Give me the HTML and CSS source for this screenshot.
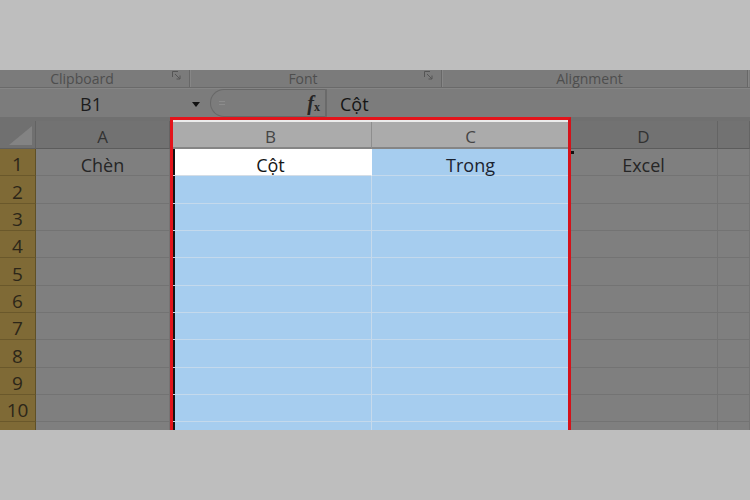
FILE: index.html
```html
<!DOCTYPE html>
<html lang="vi">
<head>
  <meta charset="UTF-8">
  <meta name="viewport" content="width=device-width, initial-scale=1.0">
  <title>Chèn cột trong Excel</title>
  <link rel="stylesheet" href="styles.css">
</head>
<body>

<div class="band"></div>

<div class="excel">
  <div class="ribbon">
    <div class="group group-clip">
      <span class="group-label">Clipboard</span>
      <svg class="launcher" width="9" height="9" viewBox="0 0 9 9"><path d="M0.5 6V0.5H6M3 3l5 5M8 4.5V8H4.5" fill="none" stroke="#555" stroke-width="1"/></svg>
    </div>
    <div class="group group-font">
      <span class="group-label">Font</span>
      <svg class="launcher" width="9" height="9" viewBox="0 0 9 9"><path d="M0.5 6V0.5H6M3 3l5 5M8 4.5V8H4.5" fill="none" stroke="#555" stroke-width="1"/></svg>
    </div>
    <div class="group group-align">
      <span class="group-label">Alignment</span>
    </div>
  </div>

  <div class="formula-bar">
    <div class="name-box">
      <span class="name">B1</span>
      <span class="name-arrow"></span>
    </div>
    <div class="fx-box">
      <span class="grip"></span>
      <span class="fx"><i>f</i><sub>x</sub></span>
    </div>
    <div class="formula">Cột</div>
  </div>

  <div class="sheet">
    <div class="row head">
      <div class="corner"><span class="corner-mark"></span></div>
      <div class="ch">A</div>
      <div class="ch lit">B</div>
      <div class="ch lit">C</div>
      <div class="ch">D</div>
      <div class="ch"></div>
    </div>
    <div id="rows"></div>
  </div>

  <!-- selected columns B:C -->
  <div class="selection"></div>
  <div class="fill-handle"></div>
</div>

<div class="band"></div>

<script>
  const rowsBox = document.getElementById("rows");

  // Column classes for A..E
  const colClass = ["", "lit col-b", "lit", "", ""];
  const firstRow = ["Chèn", "Cột", "Trong", "Excel", ""];

  // rows 1-10 plus the top sliver of the next one
  for (let i = 1; i <= 11; i++) {
    const row = document.createElement("div");
    row.className = "row";
    const values = i === 1 ? firstRow : ["", "", "", "", ""];
    let html = `<div class="rh">${i <= 10 ? i : ""}</div>`;
    values.forEach((v, c) => {
      let cls = "cell " + colClass[c];
      if (i === 1 && c === 1) cls += " active";
      html += `<div class="${cls}">${v}</div>`;
    });
    row.innerHTML = html;
    rowsBox.appendChild(row);
  }
</script>

</body>
</html>
```

FILE: styles.css
```css
* {
  box-sizing: border-box;
}
body {
  margin: 0;
  background-color: #bebebe;
  font-family: "Open Sans", "Noto Sans", sans-serif;
}
.band {
  height: 70px;
  background-color: #bebebe;
}
.excel {
  position: relative;
  height: 360px;
  overflow: hidden;
  background-color: #7a7a7a;
}

/* ribbon group captions */
.ribbon {
  display: flex;
  height: 18px;
  border-bottom: 1px solid #6a6a6a;
  background-color: #7b7b7b;
}
.group {
  display: flex;
  align-items: center;
  border-right: 1px solid #676767;
  box-shadow: 1px 0 0 #868686;
}
.group-clip {
  width: 190px;
}
.group-font {
  width: 252px;
}
.group-align {
  width: 306px;
}
.group-label {
  flex: 1;
  text-align: center;
  padding-right: 8px;
  font-size: 14px;
  color: #4e4e4e;
  line-height: 18px;
}
.group-align .group-label {
  padding-right: 10px;
}
.launcher {
  margin-right: 8px;
  margin-top: -6px;
}

/* name box + formula bar */
.formula-bar {
  display: flex;
  height: 29px;
  border-top: 1px solid #858585;
  background-color: #7c7c7c;
}
.name-box {
  display: flex;
  align-items: center;
  width: 205px;
  padding-top: 2px;
}
.name {
  padding-left: 80px;
  font-size: 18px;
  color: #1c1c1c;
}
.name-arrow {
  margin-left: auto;
  margin-right: 5px;
  border-top: 5px solid #111;
  border-left: 4px solid transparent;
  border-right: 4px solid transparent;
}
.fx-box {
  display: flex;
  align-items: center;
  justify-content: space-between;
  width: 117px;
  margin-left: 5px;
  padding: 0 5px 0 8px;
  border: 1px solid #686868;
  border-right: 2px solid #6a6a6a;
  border-radius: 14px 0 0 14px;
}
.grip {
  width: 6px;
  height: 4px;
  border-top: 1px solid #8c8c8c;
  border-bottom: 1px solid #8c8c8c;
}
.fx {
  font-family: "Liberation Serif", serif;
  font-weight: bold;
  font-size: 20px;
  color: #252525;
}
.fx sub {
  font-size: 12px;
  vertical-align: -1px;
}
.formula {
  padding-left: 13px;
  padding-top: 1px;
  font-size: 18px;
  line-height: 28px;
  color: #151515;
}

/* worksheet grid */
.sheet {
  border-top: 4px solid #707070;
}
.row {
  display: grid;
  grid-template-columns: 36px 134px 202px 198px 148px 1fr;
  grid-template-rows: 100%;
  height: 27.35px;
}
.row.head {
  height: 28px;
}
.corner {
  display: flex;
  justify-content: flex-end;
  align-items: flex-end;
  padding: 0 3px 3px 0;
  background-color: #707070;
  border-right: 1px solid #636363;
  border-bottom: 1px solid #5e5e5e;
}
.corner-mark {
  width: 23px;
  height: 19px;
  background-color: #838383;
  clip-path: polygon(100% 0, 100% 100%, 0 100%);
}
.ch {
  display: flex;
  align-items: center;
  justify-content: center;
  padding-top: 5px;
  background-color: #727272;
  border-right: 1px solid #646464;
  border-bottom: 1px solid #5c5c5c;
  font-size: 17px;
  line-height: 20px;
  color: #323232;
}
.ch.lit {
  background-color: #ababab;
  border-right-color: #8e8e8e;
  border-bottom: 2px solid #858585;
  color: #454545;
}
.rh {
  display: flex;
  align-items: center;
  justify-content: center;
  padding-top: 4px;
  background-color: #7f6a36;
  border-right: 1px solid #5f5027;
  border-bottom: 1px solid #6a582b;
  font-size: 19px;
  line-height: 20px;
  color: #2c2619;
}
.cell {
  display: flex;
  align-items: center;
  justify-content: center;
  padding-top: 5px;
  background-color: #7f7f7f;
  border-right: 1px solid #747474;
  border-bottom: 1px solid #737373;
  font-size: 18px;
  line-height: 20px;
  color: #262626;
}
.cell.lit {
  background-color: #a6cdef;
  border-right-color: #c6daec;
  border-bottom-color: #c4d9ec;
  color: #1b2330;
}
.cell.col-b {
  box-shadow: inset 5px 0 0 #141414;
}
.cell.active {
  background-color: #ffffff;
  border-right-color: #ffffff;
  border-bottom-color: #d4dde6;
  color: #151515;
}

/* red frame around the selected columns */
.selection {
  position: absolute;
  left: 170px;
  top: 47px;
  width: 401px;
  height: 340px;
  border: 3px solid #e3141b;
  border-right-color: #d4121a;
  box-shadow: inset 0 2px 0 #ececec;
}
.fill-handle {
  position: absolute;
  left: 571px;
  top: 81px;
  width: 3px;
  height: 3px;
  background-color: #111;
}
```
